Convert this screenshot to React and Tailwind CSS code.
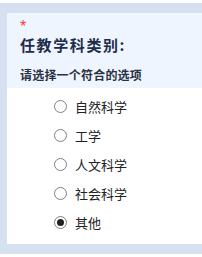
import React from "react";

const options = ["自然科学", "工学", "人文科学", "社会科学", "其他"];
const checkedIndex = 4;

function Radio({ checked }) {
  return (
    <span className="flex h-[13px] w-[13px] shrink-0 items-center justify-center rounded-full border border-[#808080] bg-white">
      {checked ? <span className="h-[7px] w-[7px] rounded-full bg-[#222]" /> : null}
    </span>
  );
}

export default function App() {
  return (
    <div
      className="flex h-[257px] w-[202px] flex-col overflow-hidden bg-[#d5e1f1]"
      style={{ fontFamily: '"Noto Sans CJK SC", "Noto Sans", sans-serif' }}
    >
      <div className="h-[3px] shrink-0 bg-white" />
      <div className="ml-[7px] mt-[10px] flex shrink-0 flex-col">
        <div className="flex h-[75px] flex-col bg-[#eef5fe] pl-[13px]">
          <div className="mt-[7px] h-[12px] text-[16px] leading-[14px] text-[#ff3b3b]" style={{ fontFamily: '"Liberation Sans", sans-serif' }}>*</div>
          <div className="mt-[3px] h-[20px] text-[15px] font-bold leading-[20px] tracking-[1.6px] text-[#1f2d4d]">
            任教学科类别:
          </div>
          <div className="mt-[13px] h-[14px] text-[12px] font-bold leading-[14px] tracking-[0.2px] text-[#2a3142]">
            请选择一个符合的选项
          </div>
        </div>
        <div className="flex h-[156px] flex-col bg-white pl-[47px] pt-[4px]">
          {options.map((opt, i) => (
            <label key={opt} className="flex h-[29px] items-center gap-[8px]">
              <Radio checked={i === checkedIndex} />
              <span className="text-[13px] leading-[16px] text-[#222]">{opt}</span>
            </label>
          ))}
        </div>
      </div>
      <div className="mt-[10px] flex-1 bg-white" />
    </div>
  );
}
